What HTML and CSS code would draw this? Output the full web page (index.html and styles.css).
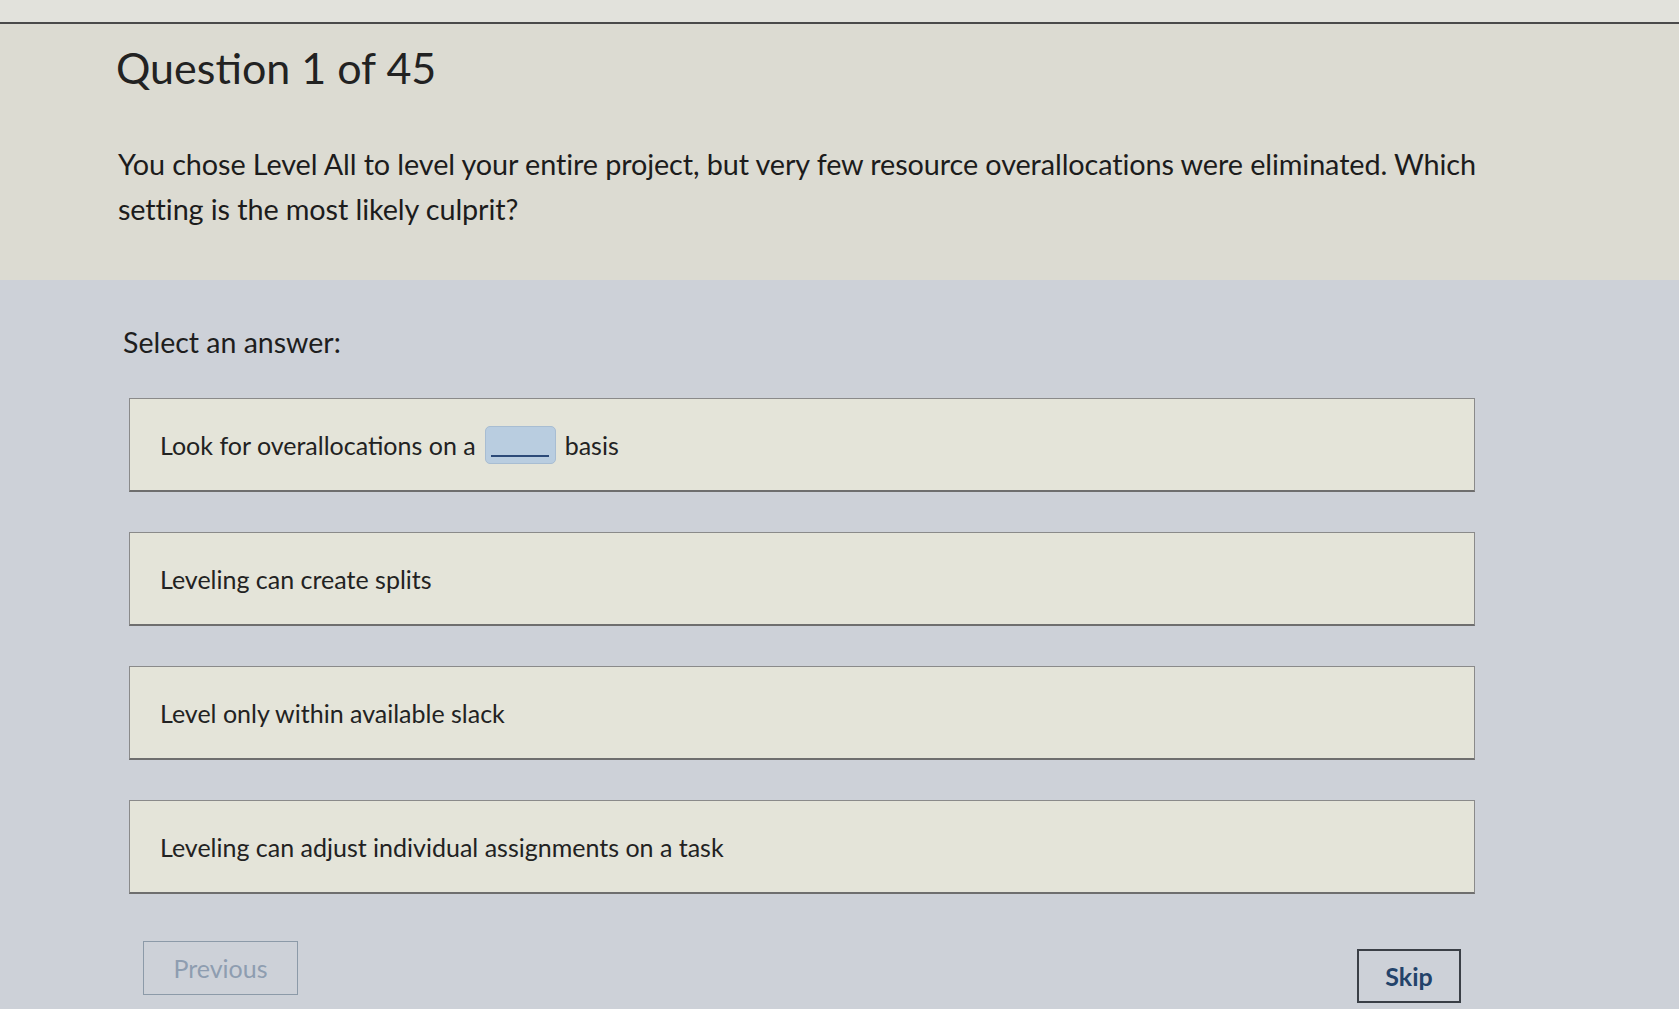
FILE: index.html
```html
<!DOCTYPE html>
<html lang="en">
<head>
  <meta charset="UTF-8">
  <meta name="viewport" content="width=device-width, initial-scale=1.0">
  <title>Question 1 of 45</title>
  <link rel="stylesheet" href="styles.css">
</head>
<body>

<div class="top-strip"></div>

<!-- Question header -->
<div class="question-head">
  <h1 class="question-title">Question 1 of 45</h1>
  <p class="question-text">You chose Level All to level your entire project, but very few resource overallocations were eliminated. Which setting is the most likely culprit?</p>
</div>

<!-- Answers -->
<div class="answers">
  <p class="select-label">Select an answer:</p>

  <div class="option-list">
    <div class="option">
      Look for overallocations on a <span class="blank"><span class="blank-line"></span></span> basis
    </div>
    <div class="option">Leveling can create splits</div>
    <div class="option">Level only within available slack</div>
    <div class="option">Leveling can adjust individual assignments on a task</div>
  </div>

  <div class="nav-row">
    <button class="nav-btn prev" disabled>Previous</button>
    <button class="nav-btn skip">Skip</button>
  </div>
</div>

</body>
</html>
```

FILE: styles.css
```css
body {
  margin: 0;
  font-family: Lato, "Open Sans", sans-serif;
  background-color: #cdd1d8;
  color: #1e1e1e;
}
.top-strip {
  height: 22px;
  background-color: #e2e2dc;
  border-bottom: 2px solid #4a4a4a;
}
.question-head {
  background-color: #dcdbd2;
  padding: 16px 0 0 116px;
  height: 240px;
}
.question-title {
  margin: 0;
  font-size: 43px;
  font-weight: 400;
  line-height: 56px;
  color: #222;
}
.question-text {
  margin: 46px 0 0 2px;
  width: 1400px;
  font-size: 28.8px;
  line-height: 45px;
  letter-spacing: -0.1px;
  color: #1c1c1c;
}
.answers {
  width: 1346px;
  padding: 0 0 0 129px;
}
.select-label {
  margin: 0 0 0 -6px;
  padding: 42px 0 36px 0;
  font-size: 28.5px;
  line-height: 40px;
  color: #1e1e1e;
}
.option-list {
  display: flex;
  flex-direction: column;
  gap: 40px;
}
.option {
  height: 91px;
  display: flex;
  align-items: center;
  padding-left: 30px;
  background-color: #e4e4d9;
  border: 1px solid #8a8a8a;
  border-bottom: 2px solid #6e6e6e;
  font-size: 25px;
  color: #222;
}
.blank {
  display: inline-flex;
  align-items: flex-end;
  justify-content: center;
  width: 71px;
  height: 38px;
  margin: 0 9px;
  background-color: #b9cde0;
  border: 1px solid #a8bdd2;
  border-radius: 5px;
  box-sizing: border-box;
  padding-bottom: 6px;
}
.blank-line {
  width: 58px;
  border-bottom: 2px solid #2c4a78;
}
.nav-row {
  display: flex;
  justify-content: space-between;
  align-items: flex-start;
  padding: 47px 14px 0 14px;
}
.nav-btn {
  font-family: Lato, "Open Sans", sans-serif;
  font-size: 25px;
  background-color: transparent;
  padding: 0;
  height: 54px;
  cursor: pointer;
}
.nav-btn.prev {
  width: 155px;
  border: 1px solid #8c9aa8;
  color: #8e9db0;
}
.nav-btn.skip {
  width: 104px;
  margin-top: 8px;
  border: 2px solid #3a3f46;
  color: #23436a;
  font-weight: 700;
}
```
